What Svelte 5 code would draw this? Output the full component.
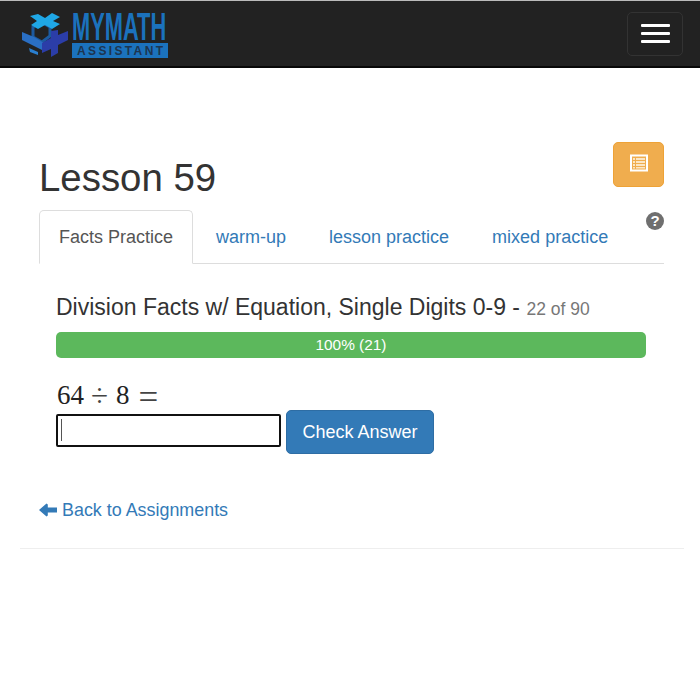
<script>
  const tabs = ['warm-up', 'lesson practice', 'mixed practice'];
</script>

<nav class="navbar">
  <svg class="logo" width="220" height="65" viewBox="21 1 220 65" aria-label="MyMath Assistant">
    <path d="M33 27 L41 22 L50 27 L50 36 L42 42 L33 37 Z" fill="none" stroke="#1c5aa0" stroke-width="3"/>
    <path d="M30 16 L38 14 L45 18 L52 13 L60 17 L53 21 L60 24 L52 29 L45 25 L38 29 L31 25 L37 21 Z" fill="#1fa7e6"/>
    <path d="M22 32 L34 37 L44 43 L44 51 L22 40 Z" fill="#2a6fc4"/>
    <path d="M42 43 L51 38 L51 31 L58 30 L58 35 L68 31 L68 40 L58 45 L58 53 L51 57 L51 49 L42 53 Z" fill="#2b3da8"/>
    <path d="M29 48 L38 52 L38 55 L30 52 Z" fill="#2a7fd0"/>
    <text class="brand" transform="translate(72 40) scale(.575 1)">MYMATH</text>
    <rect x="72" y="43" width="96" height="15" fill="#1b72bd"/>
    <text class="sub" x="77" y="55" textLength="86" lengthAdjust="spacing">ASSISTANT</text>
  </svg>
  <button class="toggle" aria-label="Menu">
    <span></span><span></span><span></span>
  </button>
</nav>

<main class="container">
  <div class="content">
    <header class="head">
      <h1>Lesson 59</h1>
      <button class="orange" aria-label="List">
        <svg width="18" height="18" viewBox="0 0 18 18">
          <rect x="0" y="0.5" width="18" height="17" fill="#fff"/>
          <rect x="2" y="2.5" width="14" height="13" fill="#f0ad4e"/>
          <path d="M3 4h2v2H3zM6 4h9v2H6zM3 7h2v2H3zM6 7h9v2H6zM3 10h2v2H3zM6 10h9v2H6zM3 13h2v1.500H3zM6 13h9v1.500H6z" fill="#fbe6c4"/>
        </svg>
      </button>
    </header>

    <div class="tabs">
      <div class="tab active">Facts Practice</div>
      {#each tabs as t}
        <div class="tab">{t}</div>
      {/each}
      <svg class="help" width="18" height="18" viewBox="0 0 18 18">
        <circle cx="9" cy="9" r="9" fill="#6f6f6f"/>
        <text x="9" y="14" text-anchor="middle" class="q">?</text>
      </svg>
    </div>

    <section class="panel">
      <h4>Division Facts w/ Equation, Single Digits 0-9 - <small>22 of 90</small></h4>
      <div class="progress"><div class="bar">100% (21)</div></div>
      <div class="math"><span class="n">64</span><span class="op div">÷</span><span class="n eight">8</span><span class="op eq">=</span></div>
      <div class="answer">
        <div class="input"><i></i></div>
        <button class="check">Check Answer</button>
      </div>
    </section>

    <a class="back" href="#top">
      <svg width="18" height="14" viewBox="0 0 18 14"><path d="M0 7 L7.500 0.500 L8.800 1.500 L8.800 4.500 L18 4.500 L18 9.500 L8.800 9.500 L8.800 12.500 L7.500 13.500 Z" fill="#337ab7"/></svg>
      Back to Assignments
    </a>
  </div>
  <hr />
</main>

<style>
  :global(body) {
    margin: 0;
    background: #fff;
    font-family: "Liberation Sans", Arial, sans-serif;
    color: #333;
  }
  .navbar {
    height: 65px;
    box-sizing: content-box;
    background: #222;
    border-top: 1px solid #bbb;
    border-bottom: 2px solid #080808;
    display: flex;
    align-items: center;
    justify-content: space-between;
    padding: 0 17px 0 21px;
  }
  .logo { display: block; margin-top: 0; }
  .brand {
    font: bold 38px "Liberation Sans", sans-serif;
    fill: #1b72bd;
  }
  .sub {
    font: bold 12px "Liberation Sans", sans-serif;
    fill: #1d3550;
  }
  .toggle {
    width: 56px;
    height: 44px;
    margin: 0;
    padding: 0;
    background: #222;
    border: 1px solid #333;
    border-radius: 5px;
    display: flex;
    flex-direction: column;
    align-items: center;
    justify-content: center;
    gap: 5px;
  }
  .toggle span {
    display: block;
    width: 29px;
    height: 3px;
    background: #fff;
    border-radius: 1px;
  }
  .container { padding: 0 16px 0 20px; }
  .content { padding: 0 20px 0 19px; }
  .head {
    display: flex;
    justify-content: space-between;
    align-items: flex-start;
    padding-top: 74px;
    height: 68px;
  }
  h1 {
    margin: 12px 0 0;
    font-size: 38.400px;
    font-weight: 400;
    line-height: 47px;
  }
  .orange {
    width: 51px;
    height: 45px;
    padding: 0 0 3px;
    background: #f0ad4e;
    border: 1px solid #eea236;
    border-radius: 5px;
    display: flex;
    align-items: center;
    justify-content: center;
  }
  .tabs {
    position: relative;
    display: flex;
    height: 53px;
    border-bottom: 1px solid #ddd;
    font-size: 18px;
    color: #337ab7;
  }
  .tab {
    box-sizing: border-box;
    height: 54px;
    padding: 16px 20.500px 0;
    line-height: 21px;
    border: 1px solid transparent;
  }
  .tab.active {
    padding: 16px 19px 0;
    margin-right: 1.500px;
    color: #555;
    background: #fff;
    border: 1px solid #ddd;
    border-bottom-color: #fff;
    border-radius: 5px 5px 0 0;
  }
  .help { position: absolute; right: 0; top: 2px; }
  .q {
    font: bold 15px "Liberation Sans", sans-serif;
    fill: #fff;
  }
  .panel { padding: 30px 18px 0 17px; }
  h4 {
    margin: 0;
    font-size: 23px;
    font-weight: 400;
    line-height: 27px;
    color: #333;
    white-space: nowrap;
  }
  small { font-size: 17.500px; color: #777; }
  .progress {
    margin-top: 9px;
    height: 26px;
    background: #f5f5f5;
    border-radius: 5px;
    overflow: hidden;
  }
  .bar {
    height: 100%;
    background: #5cb85c;
    color: #fff;
    font-size: 15.400px;
    line-height: 26px;
    text-align: center;
  }
  .math {
    margin-top: 20px;
    display: flex;
    align-items: baseline;
    height: 32px;
    font: 27px/29px "Liberation Serif", serif;
    color: #222;
    padding-left: 1px;
  }
  .op { color: #444; line-height: 29px; }
  .div { font-size: 31px; margin-left: 7px; transform: translateY(2px); }
  .eight { margin-left: 8px; }
  .eq { font-size: 35px; margin-left: 9px; transform: translateY(5px); }
  .answer { display: flex; align-items: flex-start; gap: 5px; }
  .input {
    box-sizing: border-box;
    width: 225px;
    height: 33px;
    margin-top: 4px;
    border: 2px solid #111;
    border-radius: 2px;
    padding: 3px;
    background: #fff;
  }
  .input i { display: block; width: 1px; height: 22px; background: #555; }
  .check {
    width: 148px;
    height: 44px;
    background: #337ab7;
    border: 1px solid #2e6da4;
    border-radius: 5px;
    color: #fff;
    font: 18px "Liberation Sans", sans-serif;
    padding: 0;
  }
  .back {
    display: flex;
    align-items: center;
    gap: 5px;
    margin-top: 45px;
    height: 22px;
    font-size: 17.900px;
    color: #337ab7;
    text-decoration: none;
  }
  hr {
    margin: 27px 0 0;
    border: 0;
    border-top: 1px solid #eee;
  }
</style>
